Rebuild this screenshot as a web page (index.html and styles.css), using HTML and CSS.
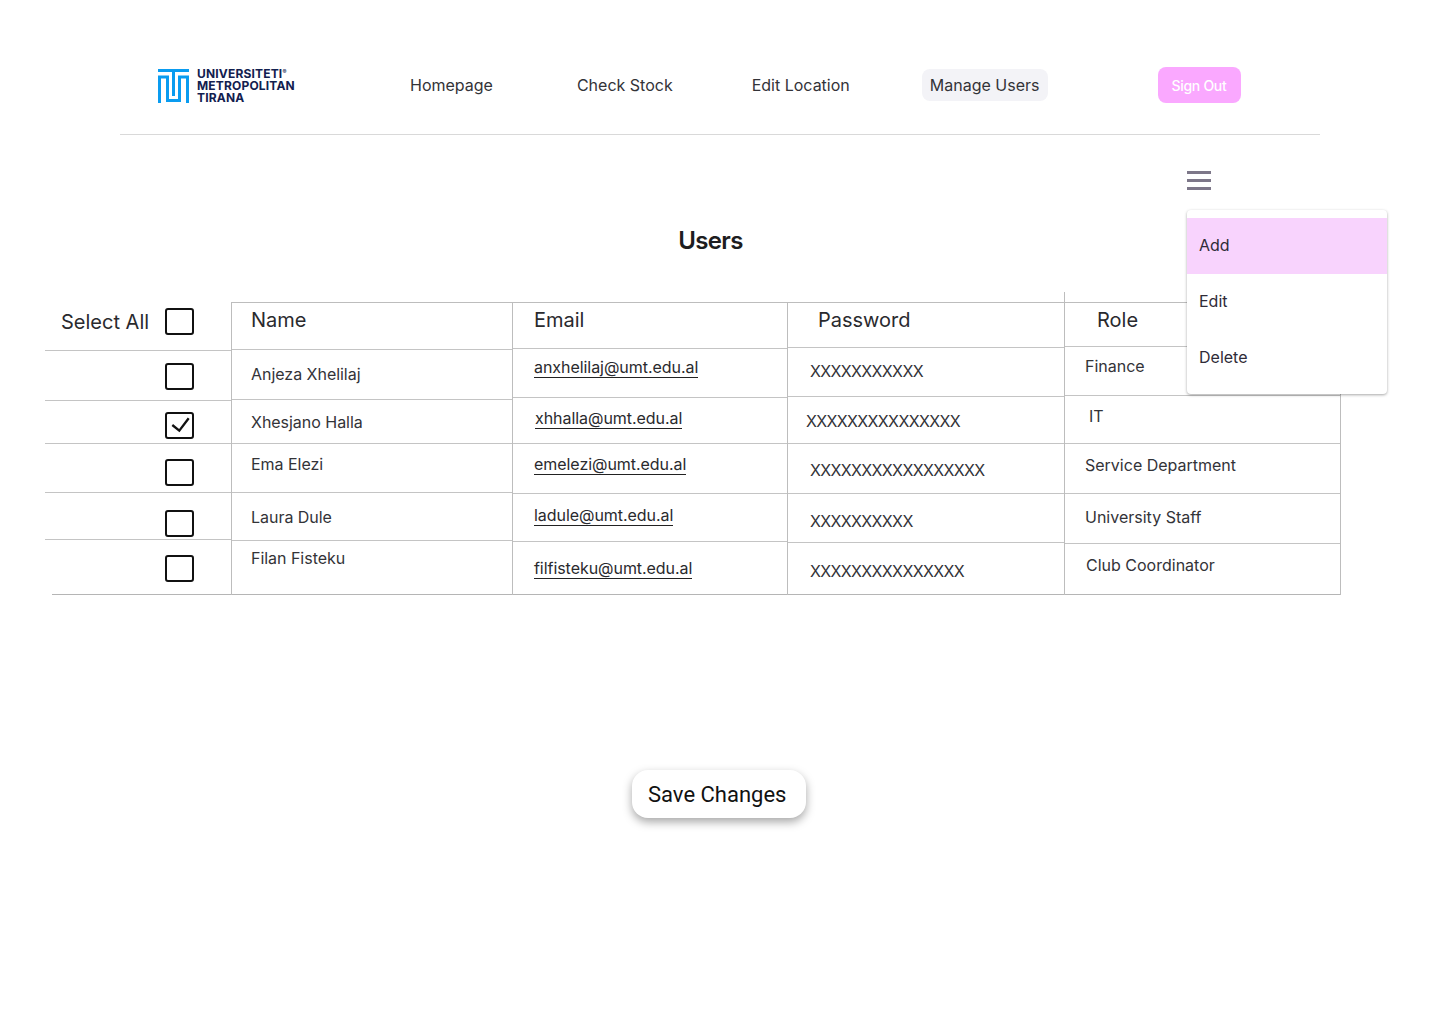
FILE: index.html
```html
<!DOCTYPE html>
<html>
 <head>
  <meta charset="UTF-8">
  <title>Users</title>
  <link rel="stylesheet" href="styles.css">
 </head>
 <body>
  <header class="top">
   <a class="logo" href="#">
    <svg class="logo-mark" width="31" height="37" viewBox="0 0 31 37">
     <path d="M0 4.5h31" fill="none" stroke="#0a9cf0" stroke-width="3"/>
     <path d="M1.5 37V11H9.5V34.5H21.5V11H29.5V37" fill="none" stroke="#0a9cf0" stroke-width="3"/>
     <path d="M15.5 6V30" fill="none" stroke="#0a9cf0" stroke-width="3"/>
    </svg>
    <span class="logo-text">UNIVERSITETI<sup>®</sup><br>METROPOLITAN<br>TIRANA</span>
   </a>
   <nav class="nav">
    <a class="nav-link" href="#">Homepage</a>
    <a class="nav-link" href="#">Check Stock</a>
    <a class="nav-link" href="#">Edit Location</a>
    <a class="nav-link active" href="#">Manage Users</a>
   </nav>
   <a class="sign-out" href="#">Sign Out</a>
  </header>

  <main class="page">
   <div class="burger"><span></span><span></span><span></span></div>
   <ul class="menu">
    <li class="on">Add</li>
    <li>Edit</li>
    <li>Delete</li>
   </ul>

   <h1 class="title">Users</h1>

   <div class="users">
    <div class="col col-select">
     <div class="cell head"><span>Select All</span><i class="box"></i></div>
     <div class="cell"><i class="box"></i></div>
     <div class="cell">
      <i class="box">
       <svg width="25" height="23" viewBox="0 0 25 23"><path d="M5.3 11l7 5.7 9.4-12.4" fill="none" stroke="#111" stroke-width="2.3"/></svg>
      </i>
     </div>
     <div class="cell"><i class="box"></i></div>
     <div class="cell"><i class="box"></i></div>
     <div class="cell"><i class="box"></i></div>
    </div>

    <div class="col col-name">
     <div class="cell head">Name</div>
     <div class="cell">Anjeza Xhelilaj</div>
     <div class="cell">Xhesjano Halla</div>
     <div class="cell">Ema Elezi</div>
     <div class="cell">Laura Dule</div>
     <div class="cell">Filan Fisteku</div>
    </div>

    <div class="col col-email">
     <div class="cell head">Email</div>
     <div class="cell"><a href="#">anxhelilaj@umt.edu.al</a></div>
     <div class="cell"><a href="#">xhhalla@umt.edu.al</a></div>
     <div class="cell"><a href="#">emelezi@umt.edu.al</a></div>
     <div class="cell"><a href="#">ladule@umt.edu.al</a></div>
     <div class="cell"><a href="#">filfisteku@umt.edu.al</a></div>
    </div>

    <div class="col col-pass">
     <div class="cell head">Password</div>
     <div class="cell">XXXXXXXXXXX</div>
     <div class="cell">XXXXXXXXXXXXXXX</div>
     <div class="cell">XXXXXXXXXXXXXXXXX</div>
     <div class="cell">XXXXXXXXXX</div>
     <div class="cell">XXXXXXXXXXXXXXX</div>
    </div>

    <div class="col col-role">
     <div class="cell head">Role</div>
     <div class="cell">Finance</div>
     <div class="cell">IT</div>
     <div class="cell">Service Department</div>
     <div class="cell">University Staff</div>
     <div class="cell">Club Coordinator</div>
    </div>
   </div>

   <div class="actions">
    <button class="save" type="button">Save Changes</button>
   </div>
  </main>
 </body>
</html>
```

FILE: styles.css
```css
*{ margin:0; padding:0; box-sizing:border-box;}

body{
 background:#fff;
 color:#2a2a2e;
 font-family:Inter,'Liberation Sans',sans-serif;
 font-size:16px;
}

a{ color:inherit; text-decoration:none;}

/* header */
.top{
 height:135px;
 margin:0 120px;
 padding:67px 0 0 38px;
 display:flex;
 align-items:flex-start;
 border-bottom:1px solid #d9d9d9;
}

.logo{
 width:137px;
 height:36px;
 display:flex;
 gap:8px;
}
.logo-mark{ flex:none; margin-top:-1px;}
.logo-text{
 margin-top:1px;
 color:#12204f;
 font-size:12px;
 font-weight:700;
 letter-spacing:.17px;
 line-height:12px;
 white-space:nowrap;
}
.logo-text sup{ font-size:6px; line-height:0; vertical-align:4px;}

.nav{
 margin:2px 0 0 107px;
 display:flex;
 gap:63px;
}
.nav-link{
 height:32px;
 padding:0 8px;
 border-radius:8px;
 line-height:33px;
 color:#333338;
}
.nav-link:first-child{ margin-right:5px;}
.nav-link.active{ background:#f3f3f7; margin-left:1px; padding-right:9px;}

.sign-out{
 width:83px;
 height:36px;
 margin-left:110px;
 padding-right:2px;
 background:#faa8ff;
 border-radius:8px;
 color:#fff;
 font-size:14px;
 font-weight:500;
 letter-spacing:-.3px;
 line-height:37px;
 text-align:center;
}

/* page */
.page{
 position:relative;
 min-height:889px;
 padding-top:36px;
}

.burger{
 width:24px;
 height:19px;
 margin-left:1187px;
 display:flex;
 flex-direction:column;
 justify-content:space-between;
}
.burger span{ height:3px; background:#7d7789;}

.menu{
 position:absolute;
 top:75px;
 left:1187px;
 z-index:2;
 width:200px;
 padding:8px 0;
 background:#fff;
 border-radius:4px;
 box-shadow:0 1px 3px rgba(0,0,0,.35);
 list-style:none;
}
.menu li{
 height:56px;
 padding-left:12px;
 line-height:55px;
 color:#2f2b38;
}
.menu li.on{ background:#f8d3fd;}

.title{
 margin:36px 0 0 -19px;
 color:#1d1d20;
 font-size:24px;
 font-weight:600;
 letter-spacing:-.6px;
 line-height:30px;
 text-align:center;
}

/* table, each column keeps its own row heights */
.users{
 margin:46px 0 0 45px;
 display:flex;
 align-items:flex-start;
}

.col{
 display:grid;
 height:293px;
 position:relative;
}
.col-select{ width:186px; grid-template-rows:49px 50px 43px 49px 47px 55px;}
.col-name{ width:281px; grid-template-rows:47px 50px 44px 49px 48px 54px;}
.col-email{ width:275px; grid-template-rows:46px 49px 46px 50px 48px 53px;}
.col-pass{ width:277px; grid-template-rows:45px 49px 47px 50px 49px 52px;}
.col-role{ width:277px; grid-template-rows:44px 49px 48px 50px 50px 51px;}

.col-name,.col-email,.col-pass,.col-role{
 border-left:1px solid #bdbdbd;
 border-top:1px solid #bdbdbd;
}
.col-role{ border-right:1px solid #bdbdbd;}
.col-role::before{
 content:'';
 position:absolute;
 top:-11px;
 left:-1px;
 width:1px;
 height:10px;
 background:#bdbdbd;
}

.cell{
 border-bottom:1px solid #c4c4c4;
 color:#333338;
 white-space:nowrap;
}
.cell:last-child{ border-bottom-color:#b5b5b5;}
.head{ color:#2a2a2e; font-size:20px; line-height:24px;}

.col-name .cell{ padding-left:19px; letter-spacing:-.03px;}
.col-name .head{ padding-top:5px; letter-spacing:0;}
.col-name .cell:nth-child(2){ padding-top:14px;}
.col-name .cell:nth-child(3){ padding-top:12px;}
.col-name .cell:nth-child(4){ padding-top:10px;}
.col-name .cell:nth-child(5){ padding-top:14px;}
.col-name .cell:nth-child(6){ padding-top:7px;}

.col-email .cell{ padding-left:21px;}
.col-email .head{ padding-top:5px;}
.col-email a{ color:#2a2a2e; border-bottom:1px solid #222; display:inline-block; letter-spacing:-.05px; line-height:19px;}
.col-email .cell:nth-child(2){ padding-top:8px;}
.col-email .cell:nth-child(3){ padding-top:10px; padding-left:22px;}
.col-email .cell:nth-child(4){ padding-top:10px;}
.col-email .cell:nth-child(5){ padding-top:11px;}
.col-email .cell:nth-child(6){ padding-top:16px;}

.col-pass .cell{ padding-left:22px; letter-spacing:-.65px;}
.col-pass .head{ padding:5px 0 0 30px; letter-spacing:0;}
.col-pass .cell:nth-child(2){ padding-top:13px;}
.col-pass .cell:nth-child(3){ padding-top:14px; padding-left:18px;}
.col-pass .cell:nth-child(4){ padding-top:16px;}
.col-pass .cell:nth-child(5){ padding-top:17px;}
.col-pass .cell:nth-child(6){ padding-top:18px;}

.col-role .cell{ padding-left:20px;}
.col-role .head{ padding:5px 0 0 32px;}
.col-role .cell:nth-child(2){ padding-top:9px;}
.col-role .cell:nth-child(3){ padding:10px 0 0 24px;}
.col-role .cell:nth-child(4){ padding-top:11px;}
.col-role .cell:nth-child(5){ padding-top:13px;}
.col-role .cell:nth-child(6){ padding:11px 0 0 21px;}

/* first column */
.col-select .cell{ padding-left:120px;}
.col-select .head{
 padding:6px 0 0 16px;
 display:flex;
 gap:16px;
 line-height:28px;
}
.col-select .cell:nth-child(2){ padding-top:12px;}
.col-select .cell:nth-child(3){ padding-top:11px;}
.col-select .cell:nth-child(4){ padding-top:15px;}
.col-select .cell:nth-child(5){ padding-top:17px;}
.col-select .cell:last-child{ margin-left:7px; padding:15px 0 0 113px;}

.box{
 width:29px;
 height:27px;
 display:block;
 border:2px solid #111;
 border-radius:3px;
 flex:none;
}
.box svg{ display:block;}

/* save */
.actions{
 margin:175px 0 0 632px;
}
.save{
 width:174px;
 height:48px;
 padding-left:16px;
 background:#fff;
 border:0;
 border-radius:16px;
 box-shadow:0 4px 10px rgba(0,0,0,.35);
 color:#111;
 font-family:Roboto,'Liberation Sans',sans-serif;
 font-size:22px;
 text-align:left;
}
```
